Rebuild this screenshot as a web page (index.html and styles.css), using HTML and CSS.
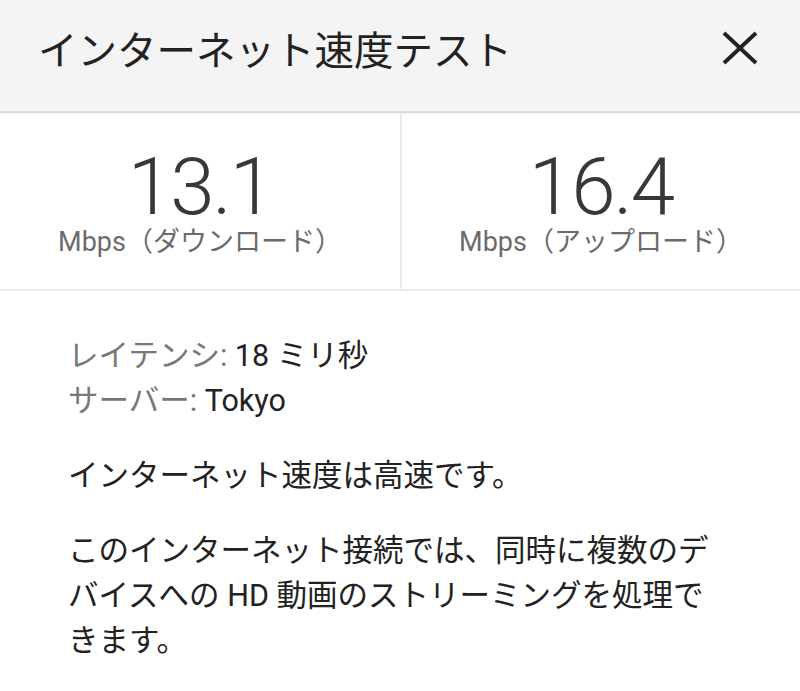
FILE: index.html
```html
<!DOCTYPE html>
<html lang="ja">
<head>
<meta charset="utf-8">
<title>インターネット速度テスト</title>
<link rel="stylesheet" href="styles.css">
</head>
<body>
<div class="page">
  <header class="header">
    <h1 class="title">インターネット速度テスト</h1>
    <button class="close" aria-label="閉じる">
      <svg width="40" height="40" viewBox="0 0 40 40"><path d="M4 5 L36 35 M36 5 L4 35" stroke="#222" stroke-width="3.8" fill="none"/></svg>
    </button>
  </header>
  <section class="stats">
    <div class="stat">
      <div class="num">13.1</div>
      <div class="unit">Mbps（ダウンロード）</div>
    </div>
    <div class="stat">
      <div class="num">16.4</div>
      <div class="unit">Mbps（アップロード）</div>
    </div>
  </section>
  <section class="details">
    <div class="kv">
      <div class="row"><span class="key">レイテンシ:</span> <span class="val">18 ミリ秒</span></div>
      <div class="row"><span class="key">サーバー:</span> <span class="val">Tokyo</span></div>
    </div>
    <p class="para">インターネット速度は高速です。</p>
    <p class="para">このインターネット接続では、同時に複数のデバイスへの HD 動画のストリーミングを処理できます。</p>
  </section>
</div>
</body>
</html>
```
FILE: styles.css
```css
html, body {
  margin: 0;
  padding: 0;
  background: #ffffff;
}
body {
  font-family: Roboto, "Noto Sans CJK JP", sans-serif;
  color: #212121;
  width: 800px;
  height: 691px;
  overflow: hidden;
}
.header {
  height: 113px;
  background: #f4f4f4;
  border-bottom: 2px solid #dcdcdc;
  box-shadow: 0 1px 2px rgba(0,0,0,0.06);
  display: flex;
  align-items: flex-start;
  justify-content: space-between;
  padding: 24px 40px 0 38px;
  box-sizing: border-box;
}
.title {
  margin: 0;
  font-family: "Noto Sans CJK JP", sans-serif;
  font-weight: 400;
  font-size: 39.5px;
  line-height: 48px;
  color: #222;
}
.close {
  border: 0;
  background: transparent;
  padding: 0;
  margin-top: 4px;
  width: 40px;
  height: 40px;
  display: block;
}
.stats {
  display: grid;
  grid-template-columns: 1fr 1fr;
  border-bottom: 2px solid #ececec;
  height: 178px;
  box-sizing: border-box;
}
.stat {
  display: flex;
  flex-direction: column;
  align-items: center;
  padding-top: 34px;
}
.stat + .stat {
  border-left: 2px solid #ebebeb;
}
.num {
  font-family: Roboto, sans-serif;
  font-weight: 300;
  font-size: 80px;
  line-height: 80px;
  color: #383838;
  letter-spacing: -2px;
}
.unit {
  font-size: 27px;
  line-height: 30px;
  color: #6b6b6b;
}
.details {
  padding: 42px 72px 0 68px;
}
.kv .row {
  font-size: 30.5px;
  line-height: 45px;
}
.key {
  color: #787878;
}
.val {
  color: #222;
}
.para {
  margin: 0;
  margin-top: 30px;
  font-size: 30.5px;
  line-height: 45px;
  color: #222;
}
.para + .para {
  margin-top: 30px;
}
```
